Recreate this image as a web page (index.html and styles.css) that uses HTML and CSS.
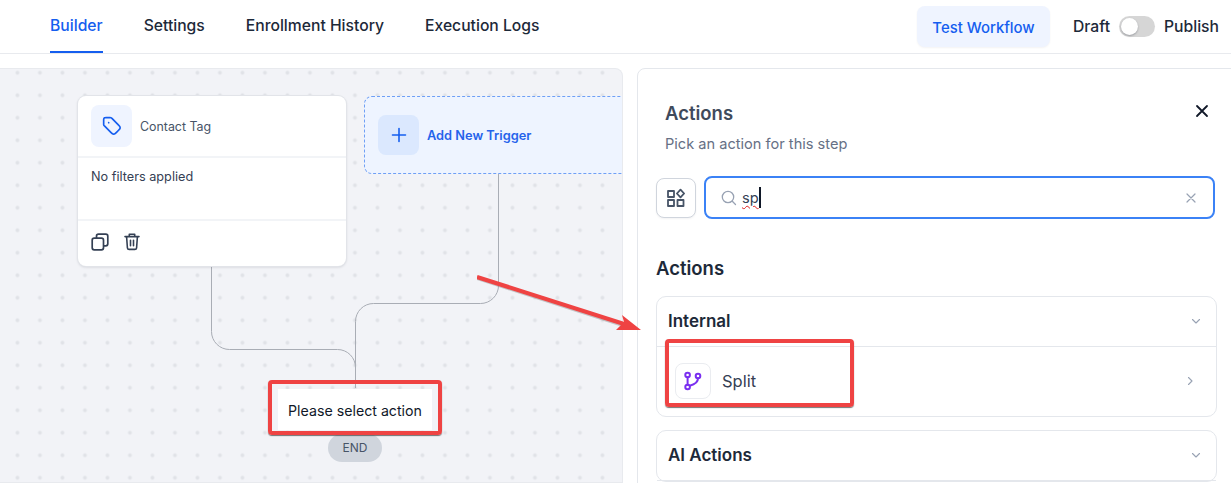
FILE: index.html
```html
<!DOCTYPE html>
<html lang="en">
<head>
<meta charset="utf-8">
<title>Workflow Builder</title>
<link rel="stylesheet" href="styles.css">
</head>
<body>
<div class="page">
  <header class="topbar">
    <nav class="tabs">
      <a class="tab active">Builder</a>
      <a class="tab">Settings</a>
      <a class="tab">Enrollment History</a>
      <a class="tab">Execution Logs</a>
    </nav>
    <div class="top-actions">
      <button class="test-btn">Test Workflow</button>
      <div class="publish">
        <span>Draft</span>
        <span class="toggle"><span class="knob"></span></span>
        <span>Publish</span>
      </div>
    </div>
  </header>

  <main class="workspace">
    <section class="canvas">
      <svg class="wires" width="623" height="415" viewBox="0 0 623 415" fill="none">
        <path d="M211.5 197V263.5a18 18 0 0 0 18 18H337.5a18 18 0 0 1 18 18V320" stroke="#a9adb5"/>
        <path d="M498.5 100V217.5a18 18 0 0 1 -18 18H373.5a18 18 0 0 0 -18 18V320" stroke="#a9adb5"/>
      </svg>

      <article class="node trigger-card">
        <div class="tc-head">
          <span class="tc-icon">
            <svg width="20" height="20" viewBox="0 0 24 24" fill="none" stroke="#155eef" stroke-width="2" stroke-linecap="round" stroke-linejoin="round"><path d="M8 8h.01M2 5.2v4.474c0 .49 0 .734.055.964.05.204.13.4.24.579.123.201.296.374.642.72l7.669 7.669c1.188 1.188 1.782 1.782 2.467 2.004a3 3 0 0 0 1.854 0c.685-.222 1.279-.816 2.467-2.004l2.212-2.212c1.188-1.188 1.782-1.782 2.004-2.467a3 3 0 0 0 0-1.854c-.222-.685-.816-1.279-2.004-2.467l-7.669-7.669c-.346-.346-.519-.519-.72-.642a2 2 0 0 0-.579-.24C10.408 2 10.163 2 9.674 2H5.2c-1.12 0-1.68 0-2.108.218a2 2 0 0 0-.874.874C2 3.52 2 4.08 2 5.2Z"/></svg>
          </span>
          <span class="tc-title">Contact Tag</span>
        </div>
        <div class="tc-body">No filters applied</div>
        <div class="tc-foot">
          <svg width="18" height="18" viewBox="0 0 18 18" fill="none" stroke="#344054" stroke-width="1.7" stroke-linejoin="round"><rect x="1.2" y="5.2" width="11.3" height="11.6" rx="2"/><path d="M5.5 5V3.2a2 2 0 0 1 2-2h7.3a2 2 0 0 1 2 2v7.6a2 2 0 0 1-2 2h-2.2"/></svg>
          <svg width="16" height="18" viewBox="0 0 16 18" fill="none" stroke="#344054" stroke-width="1.6" stroke-linecap="round" stroke-linejoin="round"><path d="M1 3.6h14M5.3 3.4V1.2h5.4v2.2M2.6 3.8l.8 11a1.8 1.8 0 0 0 1.8 1.6h5.6a1.8 1.8 0 0 0 1.8-1.6l.8-11M6.5 7.3v5.4M9.5 7.3v5.4"/></svg>
        </div>
      </article>

      <article class="node add-trigger">
        <span class="add-icon">
          <svg width="16" height="16" viewBox="0 0 16 16" fill="none" stroke="#155eef" stroke-width="1.6" stroke-linecap="round"><path d="M8 1.5v13M1.5 8h13"/></svg>
        </span>
        <span class="add-label">Add New Trigger</span>
      </article>

      <div class="node select-action">Please select action</div>
      <div class="node end-pill">END</div>
    </section>

    <aside class="panel">
      <div class="panel-head">
        <div>
          <h2 class="panel-title">Actions</h2>
          <p class="panel-sub">Pick an action for this step</p>
        </div>
        <svg class="close" width="14" height="14" viewBox="0 0 14 14" fill="none" stroke="#101828" stroke-width="1.8" stroke-linecap="round"><path d="M2 2l10 10M12 2L2 12"/></svg>
      </div>

      <div class="search-row">
        <button class="filter-btn">
          <svg width="20" height="20" viewBox="0 0 20 20" fill="none" stroke="#475467" stroke-width="1.8" stroke-linejoin="round"><rect x="2" y="3" width="6" height="6"/><rect x="2" y="12" width="6" height="6"/><rect x="11.5" y="12" width="6" height="6"/><path d="M14.5 1.6l3.6 3.9-3.6 3.9-3.6-3.9z"/></svg>
        </button>
        <div class="search">
          <svg width="16" height="16" viewBox="0 0 16 16" fill="none" stroke="#98a2b3" stroke-width="1.3" stroke-linecap="round"><circle cx="7" cy="7" r="5.7"/><path d="M11.3 11.3l3.2 3.2"/></svg>
          <span class="query"><span class="typo">sp</span><span class="caret"></span></span>
          <svg class="clear" width="10" height="10" viewBox="0 0 10 10" fill="none" stroke="#98a2b3" stroke-width="1.2" stroke-linecap="round"><path d="M1 1l8 8M9 1L1 9"/></svg>
        </div>
      </div>

      <h3 class="section-title">Actions</h3>

      <section class="group">
        <div class="group-head">
          <span>Internal</span>
          <svg width="12" height="12" viewBox="0 0 12 12" fill="none" stroke="#98a2b3" stroke-width="1.1" stroke-linecap="round" stroke-linejoin="round"><path d="M2.5 4.5L6 8l3.5-3.5"/></svg>
        </div>
        <div class="group-item">
          <span class="item-icon">
            <svg width="20" height="20" viewBox="0 0 20 20" fill="none" stroke="#7a2ff0" stroke-width="2" stroke-linecap="round"><circle cx="4.6" cy="4" r="2.3"/><circle cx="15" cy="5" r="2.3"/><circle cx="4.6" cy="16" r="2.3"/><path d="M4.6 6.3v7.4M15 7.3c0 3.6-2.8 6.1-8.2 7.4"/></svg>
          </span>
          <span class="item-label">Split</span>
          <svg class="item-chevron" width="12" height="12" viewBox="0 0 12 12" fill="none" stroke="#98a2b3" stroke-width="1.1" stroke-linecap="round" stroke-linejoin="round"><path d="M4.5 2.5L8 6l-3.5 3.5"/></svg>
        </div>
      </section>

      <section class="group">
        <div class="group-head">
          <span>AI Actions</span>
          <svg width="12" height="12" viewBox="0 0 12 12" fill="none" stroke="#98a2b3" stroke-width="1.1" stroke-linecap="round" stroke-linejoin="round"><path d="M2.5 4.5L6 8l3.5-3.5"/></svg>
        </div>
      </section>
    </aside>
  </main>

  <div class="mark mark-action"></div>
  <div class="mark mark-split"></div>
  <svg class="arrow" width="180" height="70" viewBox="0 0 180 70" fill="none">
    <path d="M0 3.8L147 51.3" stroke="#8a8a8a" stroke-opacity=".45" stroke-width="4.2"/>
    <path d="M0 3L147 50" stroke="#ef4343" stroke-width="4.2"/>
    <path d="M145 41L164 56L139 56L147 48Z" fill="#ef4343"/>
  </svg>
</div>
</body>
</html>
```
FILE: styles.css
```css
* { box-sizing: border-box; }
html, body { margin: 0; padding: 0; }
body {
  font-family: Inter, "Noto Sans", "Liberation Sans", sans-serif;
  background: #fff;
  color: #101828;
}
.page {
  position: relative;
  width: 1231px;
  height: 483px;
  overflow: hidden;
}

/* top bar */
.topbar {
  height: 54px;
  display: flex;
  justify-content: space-between;
  border-bottom: 1px solid #e8eaee;
  padding: 0 12px 0 50px;
}
.tabs { display: flex; gap: 41px; }
.tab {
  height: 53px;
  padding-top: 17px;
  font-size: 15.7px;
  line-height: 18px;
  font-weight: 500;
  color: #1d2939;
  border-bottom: 2px solid transparent;
}
.tab.active { color: #155eef; border-bottom-color: #155eef; }
.top-actions { display: flex; gap: 23px; padding-top: 6px; }
.test-btn {
  width: 133px;
  height: 41px;
  border: 0;
  border-radius: 8px;
  background: #eff4ff;
  color: #155eef;
  font: 500 14.9px/18px Inter, sans-serif;
  padding: 2px 0 0;
  box-shadow: 0 1px 2px rgba(16, 24, 40, .05);
}
.publish {
  display: flex;
  align-items: center;
  gap: 9px;
  height: 40px;
  font-size: 15.7px;
  font-weight: 500;
  color: #1d2939;
}
.toggle {
  width: 36px;
  height: 21px;
  border-radius: 11px;
  background: #d6d6d6;
  padding: 2px;
  display: flex;
}
.knob {
  width: 17px;
  height: 17px;
  border-radius: 50%;
  background: #fff;
  box-shadow: 0 1px 2px rgba(16, 24, 40, .3);
}

/* workspace */
.workspace {
  display: flex;
  gap: 14px;
  padding-top: 14px;
}
.canvas {
  position: relative;
  flex: 0 0 623px;
  height: 415px;
  border: 1px solid #e8eaee;
  border-left: 0;
  border-radius: 0 8px 0 0;
  overflow: hidden;
  background-color: #f2f3f7;
  background-image: radial-gradient(circle, #e0e2e7 1px, transparent 2.6px);
  background-size: 22.5px 22.5px;
  background-position: 6.2px -7.5px;
}
.wires { position: absolute; left: 0; top: -1px; }
.node { position: absolute; }

.trigger-card {
  left: 78px;
  top: 27px;
  width: 268px;
  height: 170px;
  background: #fff;
  border-radius: 8px;
  box-shadow: 0 0 0 1px #e2e4e9, 0 1px 3px rgba(16, 24, 40, .18);
  display: flex;
  flex-direction: column;
}
.tc-head {
  height: 62px;
  flex: none;
  display: flex;
  align-items: center;
  gap: 9px;
  padding: 0 13px;
  border-bottom: 2px solid #f2f4f7;
}
.tc-icon {
  width: 41px;
  height: 42px;
  border-radius: 8px;
  background: #eff4ff;
  display: flex;
  align-items: center;
  justify-content: center;
}
.tc-title { font-size: 12.4px; color: #475467; margin-left: -1px; }
.tc-body {
  height: 63px;
  flex: none;
  padding: 11px 13px 0;
  font-size: 12.7px;
  line-height: 16px;
  color: #344054;
  border-bottom: 2px solid #f2f4f7;
}
.tc-foot {
  flex: 1;
  display: flex;
  align-items: center;
  gap: 15px;
  padding: 0 13px 3px;
}

.add-trigger {
  left: 364px;
  top: 27px;
  width: 320px;
  height: 78px;
  background: #eef4ff;
  border: 1px dashed #6f9ff5;
  border-radius: 8px;
  display: flex;
  align-items: center;
  gap: 8px;
  padding: 0 13px;
}
.add-icon {
  width: 41px;
  height: 40px;
  border-radius: 8px;
  background: #dbe8fe;
  display: flex;
  align-items: center;
  justify-content: center;
}
.add-label { font-size: 12.8px; font-weight: 600; color: #2563eb; }

.select-action {
  left: 278px;
  top: 320px;
  width: 154px;
  height: 41px;
  background: #fff;
  font-size: 14.2px;
  line-height: 43px;
  text-align: center;
  color: #101828;
}
.end-pill {
  left: 328px;
  top: 365px;
  width: 54px;
  height: 28px;
  border-radius: 14px;
  background: #d0d5dd;
  font-size: 12px;
  line-height: 28px;
  text-align: center;
  color: #475467;
}

/* side panel */
.panel {
  flex: 0 0 620px;
  height: 430px;
  border: 1px solid #e4e7ec;
  border-radius: 8px;
  padding: 30px 0 0 18px;
  overflow: hidden;
}
.panel > * { width: 561px; }
.panel-head {
  display: flex;
  justify-content: space-between;
  padding: 0 8px 0 9px;
  height: 77px;
}
.panel-title {
  margin: 0;
  font-size: 18.5px;
  line-height: 28px;
  font-weight: 600;
  color: #3f4a5c;
}
.panel-sub {
  margin: 7px 0 0;
  font-size: 14.6px;
  line-height: 20px;
  color: #667085;
}
.close { margin-top: 5px; }
.search-row { display: flex; gap: 8px; align-items: center; width: 559px; }
.filter-btn {
  width: 40px;
  height: 40px;
  flex: none;
  padding: 0;
  border: 1px solid #d0d5dd;
  border-radius: 8px;
  background: #fff;
  display: flex;
  align-items: center;
  justify-content: center;
  box-shadow: 0 1px 2px rgba(16, 24, 40, .05);
}
.search {
  flex: 1;
  height: 43px;
  border: 2px solid #3b82f6;
  border-radius: 8px;
  display: flex;
  align-items: center;
  padding: 0 17px 0 15px;
  gap: 5px;
}
.query {
  display: flex;
  align-items: center;
  font-size: 14.6px;
  color: #344054;
}
.typo { text-decoration: underline wavy #e02020 1px; text-underline-offset: 2px; }
.caret { width: 2px; height: 21px; background: #101828; }
.clear { margin-left: auto; }
.section-title {
  margin: 37px 0 0;
  font-size: 18.5px;
  line-height: 24px;
  font-weight: 600;
  color: #1d2939;
}
.group {
  margin-top: 16px;
  border: 1px solid #e4e7ec;
  border-radius: 10px;
}
.group + .group { margin-top: 13px; }
.group-head {
  height: 50px;
  display: flex;
  align-items: center;
  justify-content: space-between;
  padding: 0 14px 1px 11px;
  border-bottom: 1px solid #e4e7ec;
  font-size: 17px;
  font-weight: 600;
  color: #1d2939;
}
.group-item {
  height: 69px;
  display: flex;
  align-items: center;
  padding: 0 20px 1px 18px;
}
.item-icon {
  width: 36px;
  height: 36px;
  border: 1px solid #eaecf0;
  border-radius: 8px;
  display: flex;
  align-items: center;
  justify-content: center;
}
.item-label { margin-left: 11px; font-size: 16.5px; color: #344054; }
.item-chevron { margin-left: auto; }

/* annotations drawn over the screenshot */
.mark {
  position: absolute;
  border: 4px solid #ef4343;
  border-radius: 4px;
  box-shadow: 0 1px 1px rgba(60, 60, 60, .7);
}
.mark-action { left: 268px; top: 380px; width: 174px; height: 55px; }
.mark-split { left: 665px; top: 339px; width: 189px; height: 68px; }
.arrow { position: absolute; left: 477px; top: 274px; }
```
